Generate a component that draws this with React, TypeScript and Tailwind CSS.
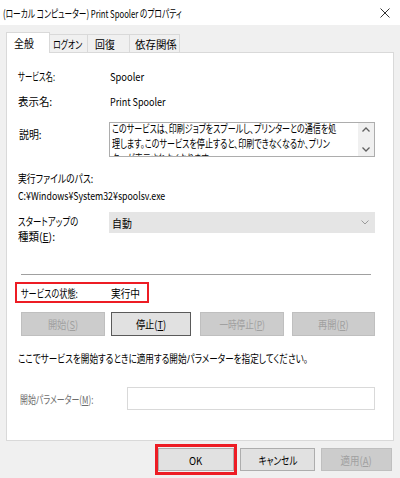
import React from "react";

const font = "font-['Noto_Sans_CJK_JP','Noto_Sans',sans-serif] [font-feature-settings:'palt']";

// Noto CJK is much wider than Meiryo UI, so each text gets squeezed on the x axis.
function T({ children, s, center }: { children: React.ReactNode; s: string; center?: boolean }) {
  return <span className={`inline-block whitespace-nowrap ${center ? "origin-center" : "origin-left"} ${s}`}>{children}</span>;
}

function Btn({ children, disabled, def, className = "" }: { children: React.ReactNode; disabled?: boolean; def?: boolean; className?: string }) {
  const tone = disabled
    ? "bg-[#cccccc] border-[#bfbfbf] text-[#a0a0a0]"
    : def
    ? "bg-[#e1e1e1] border-[#5a5a5a] text-black"
    : "bg-[#e1e1e1] border-[#adadad] text-black";
  return <div className={`flex items-center justify-center overflow-visible whitespace-nowrap border ${tone} ${className}`}>{children}</div>;
}

export default function App() {
  return (
    <div className={`h-[478px] w-[400px] overflow-hidden bg-[#f0f0f0] text-[11px] leading-[16px] text-black ${font}`}>
      {/* title bar */}
      <div className="flex h-[25px] items-center justify-between bg-white pl-[3px] pr-[10px]">
        <T s="scale-x-[0.7]">(ローカル コンピューター) Print Spooler のプロパティ</T>
        <svg width="10" height="10" viewBox="0 0 10 10" className="text-[#333]">
          <path d="M0.5 0.5 L9.5 9.5 M9.5 0.5 L0.5 9.5" stroke="currentColor" strokeWidth="1" />
        </svg>
      </div>

      {/* tabs */}
      <div className="flex items-end pl-[6px] pt-[7px]">
        <div className="relative z-10 -mb-px flex h-[21px] w-[44px] items-center border border-b-0 border-[#d9d9d9] bg-white pl-[7px]">
          <T s="scale-x-[0.9]">全般</T>
        </div>
        <div className="flex h-[18px] w-[38px] items-center border border-b-0 border-l-0 border-[#d9d9d9] pl-[3px]">
          <T s="scale-x-[0.72]">ログオン</T>
        </div>
        <div className="flex h-[18px] w-[42px] items-center border border-b-0 border-l-0 border-[#d9d9d9] pl-[7px]">
          <T s="scale-x-[0.9]">回復</T>
        </div>
        <div className="flex h-[18px] w-[50px] items-center border border-b-0 border-l-0 border-[#d9d9d9] pl-[5px]">
          <T s="scale-x-[0.95]">依存関係</T>
        </div>
      </div>

      {/* panel */}
      <div className="mx-[6px] flex h-[389px] w-[388px] flex-col border border-[#d9d9d9] bg-white pl-[11px]">
        <div className="mt-[15px] flex h-[16px] items-center">
          <div className="w-[92px] shrink-0"><T s="scale-x-[0.67]">サービス名:</T></div>
          <T s="scale-x-[0.85]">Spooler</T>
        </div>
        <div className="mt-[9px] flex h-[16px] items-center">
          <div className="w-[92px] shrink-0"><T s="scale-x-[0.95]">表示名:</T></div>
          <T s="scale-x-[0.82]">Print Spooler</T>
        </div>
        <div className="mt-[13px] flex h-[35px] items-start">
          <div className="w-[91px] shrink-0 pl-[1px] pt-[4px]"><T s="scale-x-[0.9]">説明:</T></div>
          <div className="flex h-[35px] w-[266px] border border-[#adadad]">
            <div className="flex-1 overflow-hidden pl-[2px] leading-[15px]">
              <div className="-mt-[2px]">
                <div className="flex h-[15px] items-center"><T s="scale-x-[0.73]">このサービスは、印刷ジョブをスプールし、プリンターとの通信を処</T></div>
                <div className="flex h-[15px] items-center"><T s="scale-x-[0.73]">理します。このサービスを停止すると、印刷できなくなるか、プリン</T></div>
                <div className="flex h-[15px] items-center"><T s="scale-x-[0.73]">ターが表示されなくなります。</T></div>
              </div>
            </div>
            <div className="flex w-[16px] shrink-0 flex-col items-center justify-between bg-[#f0f0f0] py-[4px]">
              <svg width="8" height="5" viewBox="0 0 8 5"><path d="M0.5 4.5 L4 1 L7.5 4.5" fill="none" stroke="#606060" strokeWidth="1.3" /></svg>
              <svg width="8" height="5" viewBox="0 0 8 5"><path d="M0.5 0.5 L4 4 L7.5 0.5" fill="none" stroke="#606060" strokeWidth="1.3" /></svg>
            </div>
          </div>
        </div>
        <div className="mt-[13px] flex h-[16px] items-center"><T s="scale-x-[0.8]">実行ファイルのパス:</T></div>
        <div className="mt-[1px] flex h-[16px] items-center"><T s="scale-x-[0.8]">C:¥Windows¥System32¥spoolsv.exe</T></div>
        <div className="mt-[9px] flex h-[33px] items-start">
          <div className="w-[91px] shrink-0 pt-[2px] leading-[15px]">
            <div className="h-[15px]"><T s="scale-x-[0.77]">スタートアップの</T></div>
            <div className="h-[15px]"><T s="scale-x-[0.95]">種類(<u>E</u>):</T></div>
          </div>
          <div className="flex h-[21px] w-[266px] items-center justify-between bg-[#e5e5e5] pl-[3px] pr-[6px]">
            <T s="scale-x-[0.9]">自動</T>
            <svg width="8" height="5" viewBox="0 0 8 5"><path d="M0.5 0.5 L4 4 L7.5 0.5" fill="none" stroke="#9a9a9a" strokeWidth="1" /></svg>
          </div>
        </div>
        <div className="ml-[3px] mt-[29px] h-px w-[350px] bg-[#a0a0a0]" />
        <div className="-ml-[3px] mt-[7px] flex h-[21px] w-[134px] items-center border-2 border-[#ed1c24] pl-[4px]">
          <div className="w-[90px] shrink-0"><T s="scale-x-[0.74]">サービスの状態:</T></div>
          <T s="scale-x-[0.88]">実行中</T>
        </div>
        <div className="mt-[9px] flex h-[24px] pl-[3px]">
          <Btn disabled className="w-[84px]"><T center s="scale-x-[0.84]">開始(<u>S</u>)</T></Btn>
          <Btn def className="ml-[6px] w-[80px]"><T center s="scale-x-[0.84]">停止(<u>T</u>)</T></Btn>
          <Btn disabled className="ml-[9px] w-[84px]"><T center s="scale-x-[0.78]">一時停止(<u>P</u>)</T></Btn>
          <Btn disabled className="ml-[8px] w-[83px]"><T center s="scale-x-[0.84]">再開(<u>R</u>)</T></Btn>
        </div>
        <div className="mt-[14px] flex h-[16px] items-center">
          <T s="scale-x-[0.78]">ここでサービスを開始するときに適用する開始パラメーターを指定してください。</T>
        </div>
        <div className="mt-[21px] flex h-[23px] items-center pl-[2px]">
          <div className="w-[107px] shrink-0 text-[#6d6d6d]"><T s="scale-x-[0.72]">開始パラメーター(<u>M</u>):</T></div>
          <div className="h-[23px] w-[248px] border border-[#d9d9d9] bg-white" />
        </div>
      </div>

      {/* bottom buttons */}
      <div className="mt-[3px] flex h-[31px] items-center pl-[155px]">
        <div className="flex h-[31px] w-[82px] items-center justify-center border-[3px] border-[#ed1c24]">
          <Btn className="h-[23px] w-[76px]"><T center s="scale-x-[0.87]">OK</T></Btn>
        </div>
        <Btn className="ml-[3px] h-[23px] w-[75px]"><T center s="scale-x-[0.78]">キャンセル</T></Btn>
        <Btn disabled className="ml-[6px] h-[23px] w-[71px]"><T center s="scale-x-[0.86]">適用(<u>A</u>)</T></Btn>
      </div>
    </div>
  );
}
